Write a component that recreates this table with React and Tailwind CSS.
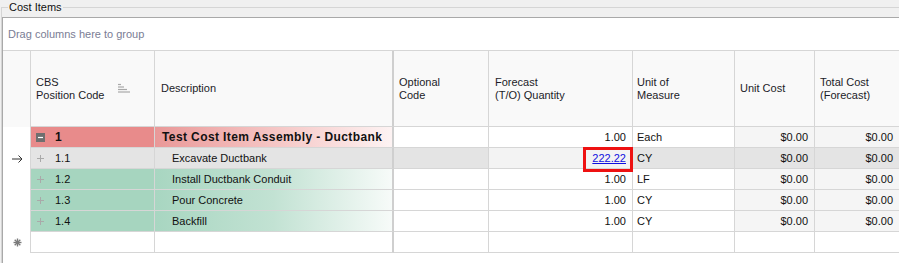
import React from 'react';

const FONT = { fontFamily: '"Liberation Sans", Arial, sans-serif' };

const rows = [
  { code: '1', desc: 'Test Cost Item Assembly - Ductbank', qty: '1.00', uom: 'Each', kind: 'group' },
  { code: '1.1', desc: 'Excavate Ductbank', qty: '222.22', uom: 'CY', kind: 'focused' },
  { code: '1.2', desc: 'Install Ductbank Conduit', qty: '1.00', uom: 'LF', kind: 'item' },
  { code: '1.3', desc: 'Pour Concrete', qty: '1.00', uom: 'CY', kind: 'item' },
  { code: '1.4', desc: 'Backfill', qty: '1.00', uom: 'CY', kind: 'item' },
];

const SortIcon = () => (
  <svg width="12" height="11" viewBox="0 0 12 11" className="ml-auto mr-[24px]">
    <g stroke="#a8a8a8" strokeWidth="1.2">
      <line x1="0" y1="1.5" x2="3" y2="1.5" />
      <line x1="0" y1="4" x2="6" y2="4" />
      <line x1="0" y1="6.5" x2="9" y2="6.5" />
      <line x1="0" y1="9" x2="12" y2="9" />
    </g>
  </svg>
);

const MinusBox = () => (
  <svg width="9" height="9" viewBox="0 0 9 9">
    <rect x="0" y="0" width="9" height="9" fill="#6f6f6f" />
    <line x1="2" y1="4.5" x2="7" y2="4.5" stroke="#fff" strokeWidth="1.2" />
  </svg>
);

const Plus = () => (
  <svg width="9" height="9" viewBox="0 0 9 9">
    <g stroke="#a9a9a9" strokeWidth="1">
      <line x1="4.5" y1="1" x2="4.5" y2="8" />
      <line x1="1" y1="4.5" x2="8" y2="4.5" />
    </g>
  </svg>
);

const Arrow = () => (
  <svg width="11" height="8" viewBox="0 0 11 8">
    <g stroke="#333" strokeWidth="1" fill="none">
      <line x1="0" y1="4" x2="10" y2="4" />
      <polyline points="6.5,0.5 10,4 6.5,7.5" />
    </g>
  </svg>
);

const NewRowStar = () => (
  <svg width="9" height="9" viewBox="0 0 9 9">
    <g stroke="#7a7a7a" strokeWidth="1.4">
      <line x1="4.5" y1="0.5" x2="4.5" y2="8.5" />
      <line x1="0.5" y1="4.5" x2="8.5" y2="4.5" />
      <line x1="1.7" y1="1.7" x2="7.3" y2="7.3" />
      <line x1="7.3" y1="1.7" x2="1.7" y2="7.3" />
    </g>
  </svg>
);

const cell = 'h-full flex items-center border-r border-b border-[#d6d6d6] shrink-0';

const DataRow = ({ row }) => {
  const group = row.kind === 'group';
  const focused = row.kind === 'focused';
  const base = focused ? 'bg-[#e4e4e4]' : 'bg-white';
  const ro = focused ? 'bg-[#e4e4e4]' : 'bg-[#f5f5f5]';
  let cbsBg = base;
  let descBg = base;
  if (group) {
    cbsBg = 'bg-[#e88b8b]';
    descBg = 'bg-linear-to-r from-[#e99898] to-[#fdf3f3]';
  } else if (row.kind === 'item') {
    cbsBg = 'bg-[#a6d5bf]';
    descBg = 'bg-linear-to-r from-[#a8d6c1] via-[#c2e2d3] to-[#f7fbf9]';
  }

  return (
    <div className="flex h-[21px] text-[11px] text-[#111]">
      <div className="w-[28px] h-full shrink-0 border-r border-[#d6d6d6] bg-white flex items-center pl-[9px]">
        {focused && <Arrow />}
      </div>
      <div className={`${cell} w-[124px] ${cbsBg} pl-[5px]`}>
        <span className="w-[19px] flex">{group ? <MinusBox /> : <Plus />}</span>
        <span className={group ? 'font-bold text-[12px]' : ''}>{row.code}</span>
      </div>
      <div className={`${cell} w-[239px] border-r-2 border-r-[#cfcfcf] ${descBg} ${group ? 'pl-[7px] font-bold text-[12px] tracking-[0.4px]' : 'pl-[17px]'}`}>
        {row.desc}
      </div>
      <div className={`${cell} w-[95px] ${base}`} />
      <div className={`${cell} w-[144px] justify-end pr-[6px] ${focused ? 'bg-[#f3f3f3]' : 'bg-white'}`}>
        {focused ? <span className="text-[#1010e0] underline">{row.qty}</span> : row.qty}
      </div>
      <div className={`${cell} w-[102px] pl-[4px] ${base}`}>{row.uom}</div>
      <div className={`${cell} w-[80px] justify-end pr-[6px] ${ro}`}>$0.00</div>
      <div className={`${cell} flex-1 border-r-0 justify-end pr-[6px] ${ro}`}>$0.00</div>
    </div>
  );
};

const App = () => {
  return (
    <div className="relative w-[899px] h-[263px] bg-[#f0f0f0] pl-px overflow-hidden" style={FONT}>
      {/* Group box title */}
      <div className="flex items-center h-[15px]">
        <div className="w-[7px] h-[8px] self-end border-l border-t border-[#d5d5d5]" />
        <span className="text-[11px] leading-[15px] text-[#111] px-[1px]">Cost Items</span>
        <div className="flex-1 h-[8px] self-end border-t border-[#d5d5d5]" />
      </div>

      <div className="border-l border-[#d5d5d5] h-[248px] pt-[2px]">
        <div className="h-full bg-white border-t border-l border-[#a9a9a9]">
          {/* Group panel */}
          <div className="h-[33px] border-b border-[#d6d6d6] flex items-center pl-[5px] text-[11px] text-[#7a7d94]">
            Drag columns here to group
          </div>

          {/* Header */}
          <div className="flex h-[76px] bg-[#f9f9f9] text-[11px] leading-[13px] text-[#1c1c28]">
            <div className="w-[28px] h-full shrink-0 border-r border-[#d6d6d6]" />
            <div className={`${cell} w-[124px] pl-[5px]`}>
              <span>CBS<br />Position Code</span>
              <SortIcon />
            </div>
            <div className={`${cell} w-[239px] border-r-2 border-r-[#cfcfcf] pl-[6px]`}>Description</div>
            <div className={`${cell} w-[95px] pl-[5px]`}>Optional<br />Code</div>
            <div className={`${cell} w-[144px] pl-[6px]`}>Forecast<br />(T/O) Quantity</div>
            <div className={`${cell} w-[102px] pl-[4px]`}>Unit of<br />Measure</div>
            <div className={`${cell} w-[80px] pl-[5px]`}>Unit Cost</div>
            <div className={`${cell} flex-1 border-r-0 pl-[5px]`}>Total Cost<br />(Forecast)</div>
          </div>

          {rows.map((r) => (
            <DataRow key={r.code} row={r} />
          ))}

          {/* New item row */}
          <div className="flex h-[21px]">
            <div className="w-[28px] h-full shrink-0 border-r border-[#d6d6d6] flex items-center pl-[10px]">
              <NewRowStar />
            </div>
            <div className={`${cell} w-[124px]`} />
            <div className={`${cell} w-[239px] border-r-2 border-r-[#cfcfcf]`} />
            <div className={`${cell} w-[95px]`} />
            <div className={`${cell} w-[144px]`} />
            <div className={`${cell} w-[102px]`} />
            <div className={`${cell} w-[80px]`} />
            <div className={`${cell} flex-1 border-r-0`} />
          </div>
        </div>
      </div>

      {/* Annotation around edited value */}
      <div className="absolute left-[583px] top-[147px] w-[50px] h-[25px] border-[3px] border-[#ee1111]" />
    </div>
  );
};

export default App;
